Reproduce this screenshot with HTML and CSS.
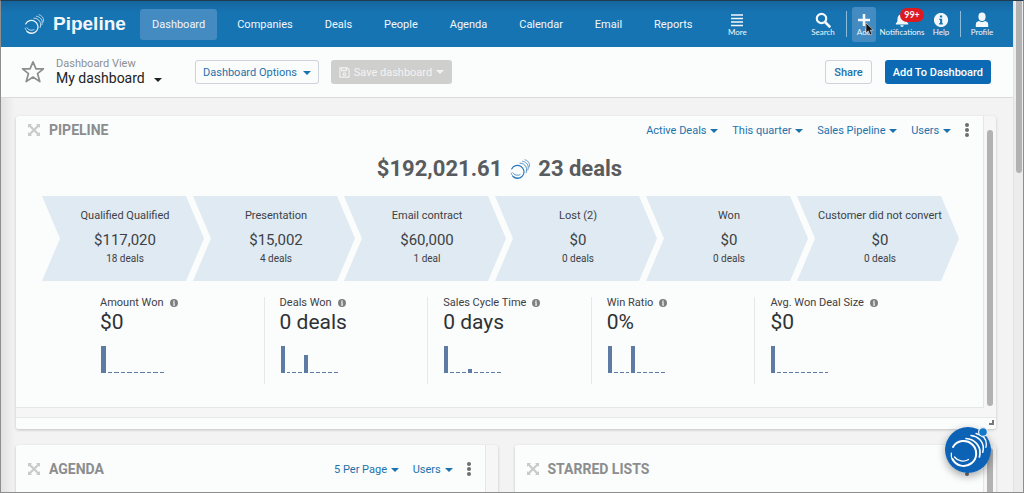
FILE: index.html
```html
<!DOCTYPE html>
<html lang="en">
<head>
  <meta charset="UTF-8">
  <meta name="viewport" content="width=device-width, initial-scale=1.0">
  <title>Pipeline - My dashboard</title>
  <link rel="stylesheet" href="styles.css">
</head>
<body>
  <!-- Shared symbols -->
  <svg class="symbols" aria-hidden="true">
    <symbol id="rings" viewBox="0 0 24 24">
      <g fill="none" stroke="currentColor" stroke-linecap="round">
        <path d="M2 12A7.800 7.800 0 1 1 3.500 21" stroke-width="1.400"/>
        <path d="M1.300 17c1 3.600 4.700 6 8.500 6" stroke-width=".8"/>
        <path d="M3.500 16.500c1.600 3 5.500 3.800 8.500 2.300" stroke-width=".9"/>
        <path d="M12 5c4.800 0 8 3.600 8 8 0 1.200-.2 2.200-.6 3.200" stroke-width="1"/>
        <path d="M15 2.700c4 .5 6.900 3.600 6.900 7.300 0 1.200-.2 2.200-.5 3" stroke-width=".9"/>
        <path d="M18 .9c3.300.9 5.400 3.200 5.400 6.300 0 .9-.1 1.700-.3 2.400" stroke-width=".8"/>
      </g>
    </symbol>
    <symbol id="move" viewBox="0 0 12 12">
      <path d="M0 0h4L2.800 1.200 6 4.400l3.200-3.200L8 0h4v4l-1.200-1.200L7.600 6l3.200 3.200L12 8v4H8l1.200-1.200L6 7.600l-3.200 3.200L4 12H0V8l1.200 1.200L4.400 6 1.200 2.800 0 4z" fill="currentColor"/>
    </symbol>
    <symbol id="info" viewBox="0 0 16 16">
      <path fill-rule="evenodd" fill="currentColor" d="M8 0a8 8 0 1 1 0 16A8 8 0 0 1 8 0zM6.700 3v2.300h2.600V3zM6 6.600v1.500h1v3.300H6V13h4v-1.600H9.300V6.600z"/>
    </symbol>
    <symbol id="dots" viewBox="0 0 4 14">
      <g fill="currentColor"><circle cx="2" cy="2" r="2"/><circle cx="2" cy="7" r="2"/><circle cx="2" cy="12" r="2"/></g>
    </symbol>
  </svg>

  <div class="window">
    <div class="page">
      <header class="topbar">
        <a href="#" class="brand">
          <svg class="brand-icon"><use href="#rings"/></svg>
          <span>Pipeline</span>
        </a>
        <nav class="main-nav">
          <a href="#" class="active">Dashboard</a>
          <a href="#">Companies</a>
          <a href="#">Deals</a>
          <a href="#">People</a>
          <a href="#">Agenda</a>
          <a href="#">Calendar</a>
          <a href="#">Email</a>
          <a href="#">Reports</a>
        </nav>
        <button type="button" class="tool more">
          <svg viewBox="0 0 16 16"><path d="M2 3h12M2 6.500h12M2 10h12M2 13.500h12" stroke="currentColor" stroke-width="1.700"/></svg>
          More
        </button>
        <div class="tools">
          <button type="button" class="tool search">
            <svg viewBox="0 0 16 16"><circle cx="6.500" cy="6.500" r="4.700" fill="none" stroke="currentColor" stroke-width="2.200"/><path d="M10 10l4.500 4.500" stroke="currentColor" stroke-width="2.600" stroke-linecap="round"/></svg>
            Search
          </button>
          <span class="divider"></span>
          <button type="button" class="tool add">
            <svg viewBox="0 0 16 16"><path d="M8 2v12M2 8h12" stroke="currentColor" stroke-width="2.600"/></svg>
            Add
            <svg class="cursor" viewBox="0 0 9 14"><path d="M1 1v10l2.300-2.200L5 13l2-.9-1.800-4H8.300z" fill="#111" stroke="#ddd" stroke-width=".6"/></svg>
          </button>
          <button type="button" class="tool notifications">
            <svg viewBox="0 0 16 16"><path d="M8 1a1.200 1.200 0 0 1 1.200 1.300C11.500 3 12.500 4.800 12.500 7c0 2.600.8 3.600 1.700 4.500v1H1.800v-1C2.700 10.600 3.500 9.600 3.500 7c0-2.200 1-4 3.300-4.700A1.200 1.200 0 0 1 8 1zM6.300 13.300h3.400a1.700 1.700 0 0 1-3.400 0z" fill="currentColor"/></svg>
            Notifications
            <span class="badge">99+</span>
          </button>
          <button type="button" class="tool help">
            <svg viewBox="-1 -1 18 18"><use href="#info" width="16" height="16"/></svg>
            Help
          </button>
          <span class="divider"></span>
          <button type="button" class="tool profile">
            <svg viewBox="0 0 16 16"><ellipse cx="8" cy="4.700" rx="3.600" ry="4.200" fill="currentColor"/><path d="M1.800 15v-2.500c0-2 1.500-3 3.200-3.400 1.900 1.200 4.100 1.200 6 0 1.700.4 3.200 1.400 3.200 3.400V15z" fill="currentColor"/></svg>
            Profile
          </button>
        </div>
      </header>

      <div class="subbar">
        <svg class="star" viewBox="0 0 24 24"><path d="M12 1.800l3 7h7.400l-5.900 4.800 2.300 8L12 17l-6.800 4.600 2.300-8L1.600 8.800H9z" fill="none" stroke="#8b8d8e" stroke-width="1.700" stroke-linejoin="round"/></svg>
        <button type="button" class="view-select">
          <span class="view-label">Dashboard View</span>
          <span class="view-name">My dashboard <i class="caret"></i></span>
        </button>
        <button type="button" class="btn btn-outline options">Dashboard Options <i class="caret"></i></button>
        <button type="button" class="btn btn-disabled" disabled>
          <svg viewBox="0 0 12 12"><path d="M1 1h8l2 2v8H1zM3 1v3h5V1" fill="none" stroke="currentColor" stroke-width="1.200"/><circle cx="6" cy="7.700" r="1.500" fill="none" stroke="currentColor" stroke-width="1.200"/></svg>
          Save dashboard <i class="caret"></i>
        </button>
        <button type="button" class="btn btn-outline share">Share</button>
        <button type="button" class="btn btn-primary">Add To Dashboard</button>
      </div>

      <main class="board">
        <!-- Pipeline widget -->
        <section class="widget pipeline">
          <div class="widget-body">
            <div class="widget-header">
              <svg class="move"><use href="#move"/></svg>
              <h2>PIPELINE</h2>
              <div class="filters">
                <button type="button">Active Deals <i class="caret"></i></button>
                <button type="button">This quarter <i class="caret"></i></button>
                <button type="button">Sales Pipeline <i class="caret"></i></button>
                <button type="button">Users <i class="caret"></i></button>
                <button type="button" class="menu" aria-label="Widget menu"><svg><use href="#dots"/></svg></button>
              </div>
            </div>
            <div class="total">
              <span>$192,021.61</span>
              <svg><use href="#rings"/></svg>
              <span>23 deals</span>
            </div>
            <ol class="stages">
              <li><span>Qualified Qualified</span><strong>$117,020</strong><small>18 deals</small></li>
              <li><span>Presentation</span><strong>$15,002</strong><small>4 deals</small></li>
              <li><span>Email contract</span><strong>$60,000</strong><small>1 deal</small></li>
              <li><span>Lost (2)</span><strong>$0</strong><small>0 deals</small></li>
              <li><span>Won</span><strong>$0</strong><small>0 deals</small></li>
              <li><span>Customer did not convert</span><strong>$0</strong><small>0 deals</small></li>
            </ol>
            <div class="stats">
              <div class="stat">
                <h3>Amount Won <svg><use href="#info"/></svg></h3>
                <p>$0</p>
                <div class="spark wide" data-values="27,1,1,1,1,1,1,1,1,1"></div>
              </div>
              <div class="stat">
                <h3>Deals Won <svg><use href="#info"/></svg></h3>
                <p>0 deals</p>
                <div class="spark" data-values="27,1,1,1,18,1,1,1,1,1"></div>
              </div>
              <div class="stat">
                <h3>Sales Cycle Time <svg><use href="#info"/></svg></h3>
                <p>0 days</p>
                <div class="spark" data-values="27,1,1,1,4,1,1,1,1,1"></div>
              </div>
              <div class="stat">
                <h3>Win Ratio <svg><use href="#info"/></svg></h3>
                <p>0%</p>
                <div class="spark" data-values="27,1,1,1,27,1,1,1,1,1"></div>
              </div>
              <div class="stat">
                <h3>Avg. Won Deal Size <svg><use href="#info"/></svg></h3>
                <p>$0</p>
                <div class="spark" data-values="27,1,1,1,1,1,1,1,1,1"></div>
              </div>
            </div>
          </div>
          <div class="track"><span class="thumb"></span></div>
          <div class="track-bottom"></div>
          <div class="widget-footer"><span class="resize"></span></div>
        </section>

        <div class="row">
          <section class="widget">
            <div class="widget-body">
              <div class="widget-header">
                <svg class="move"><use href="#move"/></svg>
                <h2>AGENDA</h2>
                <div class="filters">
                  <button type="button">5 Per Page <i class="caret"></i></button>
                  <button type="button">Users <i class="caret"></i></button>
                  <button type="button" class="menu" aria-label="Widget menu"><svg><use href="#dots"/></svg></button>
                </div>
              </div>
            </div>
            <div class="track"></div>
          </section>
          <section class="widget">
            <div class="widget-body">
              <div class="widget-header">
                <svg class="move"><use href="#move"/></svg>
                <h2>STARRED LISTS</h2>
                <div class="filters">
                  <button type="button" class="menu" aria-label="Widget menu"><svg><use href="#dots"/></svg></button>
                </div>
              </div>
            </div>
            <div class="track"><span class="thumb"></span></div>
          </section>
        </div>
      </main>
    </div>
    <div class="page-scroll"><span class="thumb"></span></div>
  </div>

  <button type="button" class="launcher" aria-label="Open assistant">
    <svg viewBox="0 0 46 46">
      <circle cx="23" cy="23" r="23" fill="#0c62b5"/>
      <g fill="none" stroke="#fff" stroke-linecap="round">
        <path d="M8 20A12.500 12.500 0 1 1 7.500 32" stroke-width="2"/>
        <path d="M6.300 26c-.4 3 .2 5.500 1.500 7.500" stroke-width="1.200"/>
        <path d="M9.500 30c3.500 4.500 9.500 5.200 14 2.500" stroke-width="1.300"/>
        <path d="M21 11.500c8 .5 14 6.500 14 14 0 1.500-.2 3-.6 4.500" stroke-width="1.700"/>
        <path d="M26 8.500c7.500 1 12.300 6 12.300 12.500 0 1.500-.2 3-.6 4.300" stroke-width="1.500"/>
        <path d="M31 6.500c6.500 1.500 10.300 5.500 10.300 10.500 0 1.200-.1 2.200-.4 3.300" stroke-width="1.300"/>
      </g>
      <circle cx="38" cy="5" r="4.400" fill="#1478ca" stroke="#e6eef6" stroke-width="1.200"/>
    </svg>
  </button>

  <script>
    // Draw the small bar charts
    document.querySelectorAll('.spark').forEach(function (spark) {
      spark.dataset.values.split(',').forEach(function (value) {
        const bar = document.createElement('span');
        bar.style.height = value + 'px';
        spark.appendChild(bar);
      });
    });
  </script>
</body>
</html>
```

FILE: styles.css
```css
* {
  box-sizing: border-box;
}

body {
  margin: 0;
  font-family: Roboto, "Open Sans", sans-serif;
  font-size: 11px;
  color: #3d4145;
  background: #f3f3f3;
}

button {
  font: inherit;
  color: inherit;
  background: none;
  border: 0;
  padding: 0;
  cursor: pointer;
  white-space: nowrap;
}

a {
  color: inherit;
  text-decoration: none;
}

h2, h3, p, ol {
  margin: 0;
  padding: 0;
}

.symbols {
  position: absolute;
  width: 0;
  height: 0;
}

.caret {
  display: inline-block;
  border: 4px solid transparent;
  border-top: 4px solid currentColor;
  border-bottom: 0;
  margin-left: 3px;
  vertical-align: 1px;
}

/* Window */
.window {
  display: flex;
  height: 100vh;
  overflow: hidden;
  border: 1px solid #8e8e8e;
  border-top-color: #203a50;
}

.page {
  flex: 1;
  min-width: 0;
}

.page-scroll {
  width: 10px;
  padding: 0 1px 0 2px;
  background: #ececec;
  border-left: 1px solid #e2e2e2;
}

.thumb {
  display: block;
  background: #b2b2b2;
  border-radius: 3px;
}

.page-scroll .thumb {
  height: 35%;
  border-radius: 0 0 3px 3px;
}

/* Top bar */
.topbar {
  display: flex;
  align-items: center;
  height: 46px;
  padding: 0 16px 0 23px;
  color: #f2f7fb;
  background: linear-gradient(#16659d, #1674b3 12px);
}

.brand {
  display: flex;
  align-items: center;
  gap: 9px;
  width: 116px;
  font: bold 19px "Liberation Sans", sans-serif;
}

.brand-icon {
  width: 20px;
  height: 20px;
}

.main-nav {
  display: flex;
  gap: 8px;
}

.main-nav a {
  padding: 8px 12px;
  line-height: 15px;
  border-radius: 3px;
}

.main-nav .active {
  background: #438bc0;
}

.tool {
  position: relative;
  display: flex;
  flex-direction: column;
  align-items: center;
  justify-content: center;
  height: 35px;
  font-family: Lato, sans-serif;
  font-size: 8px;
  line-height: 9px;
}

.tool svg {
  width: 16px;
  height: 16px;
}

.more {
  width: 30px;
  margin-left: 18px;
}

.tools {
  display: flex;
  align-items: center;
  margin-left: auto;
}

.divider {
  width: 1px;
  height: 26px;
  background: #8dbbdc;
}

.search {
  width: 30px;
  margin-right: 8px;
}

.add {
  width: 24px;
  margin-left: 5px;
  border-radius: 3px;
  background: #438bc0;
}

.tool .cursor {
  position: absolute;
  left: 13px;
  top: 15px;
  width: 9px;
  height: 14px;
}

.notifications {
  width: 52px;
}

.badge {
  position: absolute;
  left: 24px;
  top: 1px;
  width: 24px;
  border-radius: 7px;
  background: #dc1a20;
  font-size: 9px;
  font-weight: bold;
  line-height: 14px;
}

.help {
  width: 26px;
  margin-right: 6px;
}

.profile {
  width: 30px;
  margin-left: 6px;
}

/* Dashboard bar */
.subbar {
  display: flex;
  align-items: center;
  height: 51px;
  padding: 0 22px 0 20px;
  background: #fbfcfc;
  border-bottom: 1px solid #dadcdc;
}

.star {
  width: 24px;
  height: 24px;
}

.view-select {
  display: flex;
  flex-direction: column;
  width: 139px;
  margin-left: 11px;
  text-align: left;
}

.view-label {
  font-size: 11px;
  line-height: 13px;
  color: #8d9092;
}

.view-name {
  font-size: 14px;
  line-height: 17px;
  color: #222;
}

.view-name .caret {
  margin-left: 6px;
}

.btn {
  height: 24px;
  padding: 0 7px;
  border: 1px solid transparent;
  border-radius: 3px;
}

.btn-outline {
  color: #1b72ad;
  border-color: #ccd3dc;
}

.btn-disabled {
  display: flex;
  align-items: center;
  gap: 4px;
  margin-left: 12px;
  color: #f5f3f3;
  background: #cfcfcd;
  cursor: default;
}

.btn-disabled svg {
  width: 11px;
  height: 11px;
}

.btn-disabled .caret {
  margin: 0;
}

.share {
  margin-left: auto;
  padding: 0 8px;
  font-weight: 500;
}

.btn-primary {
  margin-left: 13px;
  color: #fff;
  background: #0b6ab3;
  font-weight: 500;
}

/* Widgets */
.board {
  padding: 18px 17px 0 15px;
  background: linear-gradient(90deg, #e2e2e2, #f3f3f3 14px);
}

.widget {
  display: grid;
  grid-template-columns: 1fr 12px;
  background: #f6f6f6;
  border-radius: 3px;
  box-shadow: 0 1px 3px rgba(0, 0, 0, 0.2);
  overflow: hidden;
}

.widget-body {
  min-width: 0;
  background: #fbfcfc;
  border: 1px solid #e6e6e6;
  border-width: 0 1px 1px 0;
}

.widget-header {
  display: flex;
  align-items: center;
  height: 48px;
  padding: 0 14px 0 12px;
}

.pipeline .widget-header {
  height: 28px;
}

.move {
  width: 12px;
  height: 12px;
  margin-right: 9px;
  color: #c9caca;
}

.widget h2 {
  font-size: 14px;
  line-height: 16px;
  color: #8b8d8e;
}

.filters {
  display: flex;
  align-items: center;
  gap: 14px;
  margin-left: auto;
  color: #1b72ad;
}

.filters .caret {
  margin-left: 1px;
}

.filters .menu {
  display: flex;
  color: #6b6d6e;
}

.menu svg {
  width: 4px;
  height: 14px;
}

.track {
  padding: 14px 3px 2px;
}

.track .thumb {
  width: 6px;
  height: 100%;
}

.row .track {
  padding: 3px 3px 0;
}

.track-bottom {
  grid-column: span 2;
  height: 10px;
  border-bottom: 1px solid #e8e8e8;
}

.widget-footer {
  display: flex;
  grid-column: span 2;
  justify-content: flex-end;
  height: 11px;
  padding: 2px 2px 0 0;
  background: #fbfcfc;
}

.resize {
  width: 5px;
  height: 5px;
  border: solid #777;
  border-width: 0 2px 2px 0;
}

/* Pipeline totals */
.total {
  display: flex;
  align-items: center;
  justify-content: center;
  gap: 8px;
  margin-top: 12px;
  font-size: 22px;
  font-weight: bold;
  line-height: 26px;
  color: #595c5e;
}

.total svg {
  width: 20px;
  height: 20px;
  color: #2a78b8;
}

.stages {
  display: grid;
  grid-template-columns: repeat(6, 1fr);
  margin: 14px 35px 0 26px;
  list-style: none;
}

.stages li {
  display: flex;
  flex-direction: column;
  align-items: center;
  height: 85px;
  margin-right: -11px;
  padding: 13px 0 0 4px;
  white-space: nowrap;
  background: #e0eaf2;
  clip-path: polygon(0 0, calc(100% - 18px) 0, 100% 50%, calc(100% - 18px) 100%, 0 100%, 18px 50%);
}

.stages span {
  font-size: 11px;
  line-height: 14px;
}

.stages strong {
  margin: 8px 0 4px;
  font-size: 15px;
  font-weight: normal;
  line-height: 18px;
}

.stages small {
  font-size: 10px;
  line-height: 12px;
}

.stats {
  display: grid;
  grid-template-columns: repeat(5, 1fr);
  margin: 16px 65px 23px 84px;
}

.stat {
  height: 87px;
  padding-left: 15px;
  border-left: 1px solid #e6e8e8;
}

.stat:first-child {
  padding-left: 0;
  border-left: 0;
}

.stat h3 {
  display: flex;
  align-items: center;
  gap: 6px;
  font-size: 11px;
  font-weight: normal;
  line-height: 12px;
}

.stat h3 svg {
  width: 8px;
  height: 8px;
  color: #7d7f80;
}

.stat p {
  font-size: 21px;
  line-height: 26px;
  color: #2f3235;
}

.spark {
  display: flex;
  align-items: flex-end;
  gap: 2px;
  width: 57px;
  height: 27px;
  margin: 11px 0 0 1px;
}

.spark.wide {
  width: 63px;
}

.spark span {
  flex: 1;
  background: #5d7ba3;
}

.row {
  display: grid;
  grid-template-columns: 1fr 1fr;
  gap: 17px;
  margin-top: 16px;
}

.row .widget {
  height: 80px;
}

/* Floating launcher */
.launcher {
  position: fixed;
  right: 33px;
  bottom: 20px;
  width: 46px;
  height: 46px;
  border-radius: 50%;
  box-shadow: 0 3px 8px rgba(0, 0, 0, 0.35);
}

.launcher svg {
  display: block;
  overflow: visible;
}
```
